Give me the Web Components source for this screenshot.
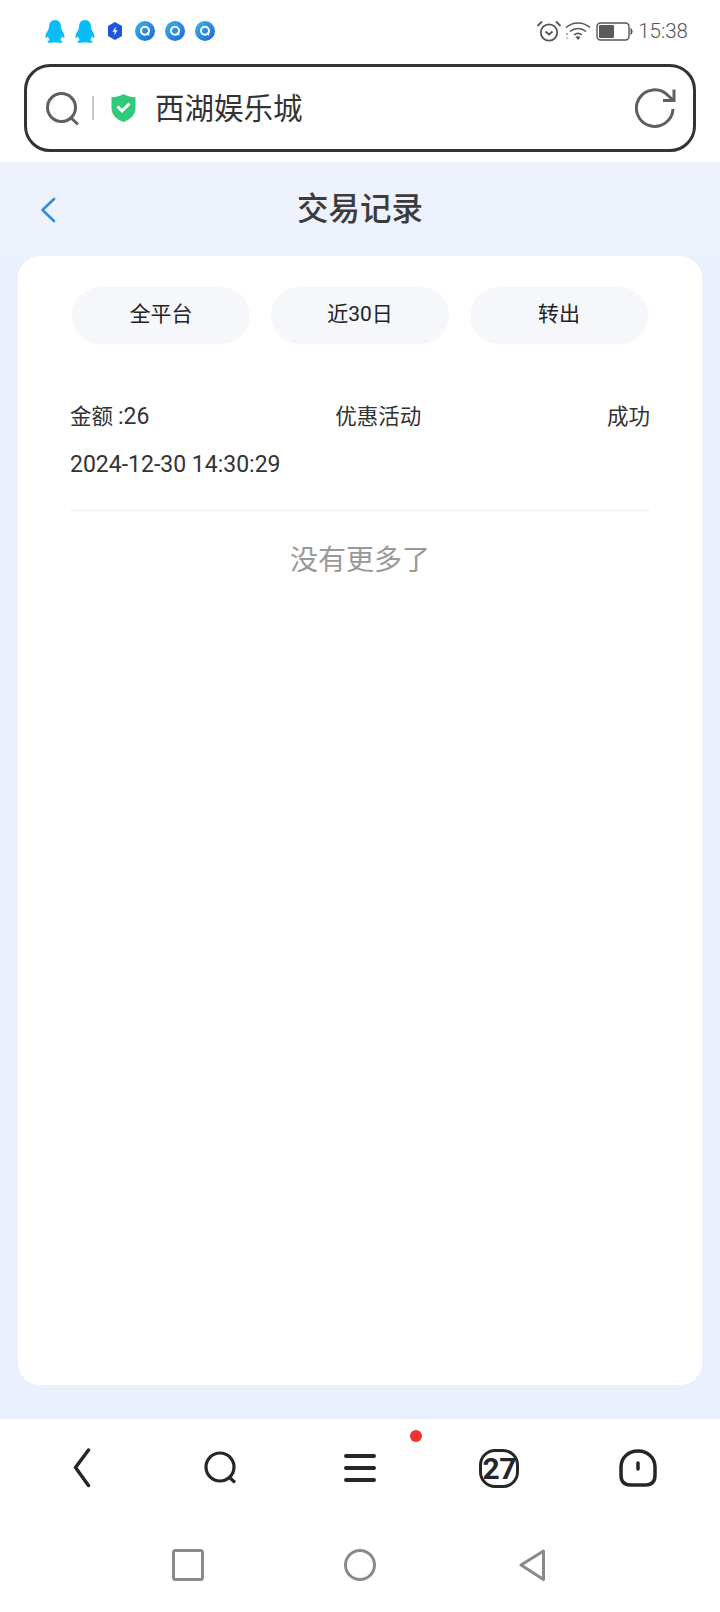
<!DOCTYPE html>
<html lang="zh">
<head>
<meta charset="utf-8">
<title>交易记录</title>
<style>
html, body { margin: 0; padding: 0; }
body {
    width: 720px;
    height: 1612px;
    overflow: hidden;
    display: flex;
    flex-direction: column;
    background: #fff;
    font-family: Roboto, "Noto Sans CJK SC", sans-serif;
}
</style>
</head>
<body>
<status-bar></status-bar>
<address-bar>西湖娱乐城</address-bar>
<page-header>交易记录</page-header>
<record-panel>
    <filter-pill>全平台</filter-pill>
    <filter-pill>近30日</filter-pill>
    <filter-pill>转出</filter-pill>
    <record-row slot="rows" label="金额" amount=":26" kind="优惠活动" state="成功" time="2024-12-30 14:30:29"></record-row>
</record-panel>
<browser-toolbar></browser-toolbar>
<nav-keys></nav-keys>

<script>
const penguin = `<svg width="20" height="23" viewBox="0 0 20 23"><path fill="#08bdf5" d="M10 0C6 0 4 3 4 7 4 9 2.500 11 1.500 13 .5 15 0 18 1 18 1.800 18 2.500 17 3 16 3.300 18 4 19.500 5 20 3.500 20.500 2.500 21 2.500 22 2.500 23 6 23 8 22.500H12C14 23 17.500 23 17.500 22 17.500 21 16.500 20.500 15 20 16 19.500 16.700 18 17 16 17.500 17 18.200 18 19 18 20 18 19.500 15 18.500 13 17.500 11 16 9 16 7 16 3 14 0 10 0z"/></svg>`;

const qBadge = `<svg width="20" height="20" viewBox="0 0 20 20"><defs><linearGradient id="qg" x1="0" y1="0" x2="1" y2="1"><stop offset="0" stop-color="#3fb2ee"/><stop offset="1" stop-color="#1668d2"/></linearGradient></defs><circle cx="10" cy="10" r="10" fill="url(#qg)"/><circle cx="10" cy="9.700" r="4" fill="none" stroke="#fff" stroke-width="2"/><path d="M11.800 11.800l2.200 2.200" stroke="#fff" stroke-width="1.800"/></svg>`;

class StatusBar extends HTMLElement {
    constructor() {
        super();
        this.shadowDOM = this.attachShadow({mode: "open"});
    }

    connectedCallback() {
        this.shadowDOM.innerHTML = `
        <style>
        :host {
            display: flex;
            align-items: center;
            justify-content: space-between;
            height: 62px;
            padding: 0 32px 0 45px;
        }
        .apps, .sys { display: flex; align-items: center; }
        .apps { gap: 10px; }
        .apps .hex { margin: 0 2px; }
        .sys svg { display: block; }
        .time {
            margin-left: 5px;
            font: 300 20.500px Roboto, sans-serif;
            color: #555;
        }
        </style>
        <div class="apps">
            ${penguin}${penguin}
            <svg class="hex" width="16" height="18" viewBox="0 0 16 18"><path fill="#1b55d8" d="M8 0l7 4v10l-7 4-7-4V4z"/><path fill="#fff" d="M8.800 4.500L5.500 9.700h2.200l-.5 3.800 3.300-5.200H8.300z"/></svg>
            ${qBadge}${qBadge}${qBadge}
        </div>
        <div class="sys">
            <svg width="26" height="22" viewBox="0 0 26 22" fill="none" stroke="#555" stroke-width="1.800"><circle cx="13" cy="12.500" r="8.200"/><path d="M9.500 11.500l3.500 3 3.500-3"/><path d="M1.500 6L6 1.500M24.500 6L20 1.500"/></svg>
            <svg style="margin-left:2px" width="28" height="20" viewBox="0 0 28 20" fill="none" stroke="#555" stroke-width="1.600"><path d="M2 6.500C9 .5 19 .5 26 6.500"/><path d="M6 10.500c4.800-4 11.200-4 16 0"/><path d="M10 14c2.500-2 5.500-2 8 0"/><path fill="#555" stroke="none" d="M11.500 16c1.500-1 3.500-1 5 0L14 19z"/><circle cx="3" cy="13" r=".9" fill="#888" stroke="none"/><circle cx="3" cy="17" r=".9" fill="#bbb" stroke="none"/></svg>
            <svg style="margin-left:4px" width="37" height="19" viewBox="0 0 37 19"><rect x="1" y="1" width="32" height="17" rx="3.500" fill="none" stroke="#555" stroke-width="1.400"/><rect x="3" y="3" width="15" height="13" rx="1" fill="#5a5a5a"/><path d="M34.500 6c1.500.6 2 2 2 3.500s-.5 2.900-2 3.500z" fill="#555"/></svg>
            <span class="time">15:38</span>
        </div>
        `;
    }
}

class AddressBar extends HTMLElement {
    constructor() {
        super();
        this.shadowDOM = this.attachShadow({mode: "open"});
    }

    connectedCallback() {
        this.shadowDOM.innerHTML = `
        <style>
        :host {
            display: flex;
            align-items: center;
            box-sizing: border-box;
            height: 88px;
            margin: 2px 24px 10px;
            padding: 0 17px 0 19px;
            border: 3px solid #333;
            border-radius: 26px;
            background: #fff;
        }
        .line { width: 2px; height: 24px; margin: 0 17px 0 13px; background: #c8c8c8; }
        .label {
            flex: 1;
            margin-left: 19px;
            padding-bottom: 4px;
            font: 400 29.500px "Noto Sans CJK SC", sans-serif;
            color: #333;
        }
        svg { display: block; }
        </style>
        <svg width="33" height="33" viewBox="0 0 33 33" fill="none" stroke="#5f5f5f" stroke-width="3"><circle cx="15.500" cy="15.500" r="14"/><path d="M25 26l6 5.500" stroke-linecap="round"/></svg>
        <span class="line"></span>
        <svg width="25" height="28" viewBox="0 0 25 28"><path fill="#2fcb78" d="M12.500 0c3 2 7 3 12 3.200V14c0 7-5 11.500-12 14C5.500 25.500.5 21 .5 14V3.200C5.500 3 9.500 2 12.500 0z"/><path d="M6.500 12.500l4.500 4.500 7.500-7.500" fill="none" stroke="#fff" stroke-width="3"/></svg>
        <span class="label"><slot></slot></span>
        <svg width="41" height="40" viewBox="0 0 41 40" fill="none" stroke="#5f5f5f" stroke-width="3"><path d="M38 21a18.300 18.300 0 1 1-5-13.500L38 12"/><path d="M39 1.500V12.500H28"/></svg>
        `;
    }
}

class PageHeader extends HTMLElement {
    constructor() {
        super();
        this.shadowDOM = this.attachShadow({mode: "open"});
    }

    connectedCallback() {
        this.shadowDOM.innerHTML = `
        <style>
        :host {
            display: flex;
            align-items: center;
            justify-content: center;
            position: relative;
            box-sizing: border-box;
            height: 94px;
            padding-bottom: 6px;
            background: #eef2fc;
            font: 500 31.500px "Noto Sans CJK SC", sans-serif;
            color: #3c3c3c;
        }
        svg { position: absolute; left: 40px; top: 35px; }
        </style>
        <svg width="16" height="26" viewBox="0 0 16 26" fill="none" stroke="#2f8de0" stroke-width="2.600" stroke-linecap="round" stroke-linejoin="round"><path d="M14 2L2.500 13 14 24"/></svg>
        <slot></slot>
        `;
    }
}

class FilterPill extends HTMLElement {
    constructor() {
        super();
        this.shadowDOM = this.attachShadow({mode: "open"});
    }

    connectedCallback() {
        this.shadowDOM.innerHTML = `
        <style>
        :host {
            display: flex;
            align-items: center;
            justify-content: center;
            box-sizing: border-box;
            width: 178px;
            height: 57px;
            padding-bottom: 7px;
            border-radius: 29px;
            background: #f6f7fb;
            font: 400 21px Roboto, "Noto Sans CJK SC", sans-serif;
            color: #222;
        }
        </style>
        <slot></slot>
        `;
    }
}

class RecordRow extends HTMLElement {
    constructor() {
        super();
        this.shadowDOM = this.attachShadow({mode: "open"});
    }

    connectedCallback() {
        this.shadowDOM.innerHTML = `
        <style>
        :host {
            display: block;
            height: 166px;
            margin: 0 -2px;
            border-bottom: 1px solid #f0f0f0;
            font: 400 21.500px/30px Roboto, "Noto Sans CJK SC", sans-serif;
            color: #333;
        }
        .top { display: flex; justify-content: space-between; padding-top: 58px; }
        .num { font-size: 23px; margin-left: 5px; }
        .time { margin-top: 18px; font-size: 23px; }
        </style>
        <div class="top">
            <span>${this.getAttribute("label")}<span class="num">${this.getAttribute("amount")}</span></span>
            <span>${this.getAttribute("kind")}</span>
            <span>${this.getAttribute("state")}</span>
        </div>
        <div class="time">${this.getAttribute("time")}</div>
        `;
    }
}

class RecordPanel extends HTMLElement {
    constructor() {
        super();
        this.shadowDOM = this.attachShadow({mode: "open"});
    }

    connectedCallback() {
        this.shadowDOM.innerHTML = `
        <style>
        :host {
            display: block;
            flex: 1;
            min-height: 0;
            padding-bottom: 34px;
            background: #ebf0fd;
        }
        .card {
            box-sizing: border-box;
            height: 100%;
            margin: 0 18px;
            padding: 31px 54px 0;
            border-radius: 22px;
            background: #fff;
        }
        .filters { display: flex; justify-content: space-between; }
        .end {
            margin-top: 27px;
            text-align: center;
            font: 400 28px "Noto Sans CJK SC", sans-serif;
            color: #999;
        }
        </style>
        <div class="card">
            <div class="filters"><slot></slot></div>
            <slot name="rows"></slot>
            <div class="end">没有更多了</div>
        </div>
        `;
    }
}

class BrowserToolbar extends HTMLElement {
    constructor() {
        super();
        this.shadowDOM = this.attachShadow({mode: "open"});
    }

    connectedCallback() {
        this.shadowDOM.innerHTML = `
        <style>
        :host {
            display: flex;
            align-items: center;
            height: 98px;
            padding: 0 12px;
            background: #fff;
        }
        .item {
            flex: 1;
            display: flex;
            justify-content: center;
            align-items: center;
            position: relative;
        }
        .dot {
            position: absolute;
            left: 120px;
            top: -23px;
            width: 12px;
            height: 12px;
            border-radius: 50%;
            background: #ee3333;
        }
        .day {
            box-sizing: border-box;
            display: flex;
            align-items: center;
            justify-content: center;
            width: 40px;
            height: 39px;
            border: 3.500px solid #262626;
            border-radius: 16px;
            font: 700 30px Roboto, sans-serif;
            letter-spacing: -.5px;
            color: #262626;
        }
        svg { display: block; }
        </style>
        <div class="item"><svg width="18" height="40" viewBox="0 0 18 40" fill="none" stroke="#262626" stroke-width="3.500" stroke-linecap="round" stroke-linejoin="round"><path d="M15.500 2L2.500 19.500 15.500 37.500"/></svg></div>
        <div class="item"><svg width="34" height="34" viewBox="0 0 34 34" fill="none" stroke="#262626" stroke-width="3.200"><circle cx="16" cy="16" r="14"/><path d="M25 26l6 5.500"/></svg></div>
        <div class="item"><svg width="32" height="30" viewBox="0 0 32 30" stroke="#262626" stroke-width="4" stroke-linecap="round"><path d="M2 3h28M2 15h28M2 27h28"/></svg><span class="dot"></span></div>
        <div class="item"><span class="day">27</span></div>
        <div class="item"><svg width="38" height="38" viewBox="0 0 38 38" fill="none" stroke="#262626" stroke-width="3.500"><path d="M19 2c9.500 0 17 6.500 17 16v8c0 6-3 10-9.500 10h-15C5 36 2 32 2 26v-8C2 8.500 9.500 2 19 2z"/><path d="M19 14v6" stroke-linecap="round"/></svg></div>
        `;
    }
}

class NavKeys extends HTMLElement {
    constructor() {
        super();
        this.shadowDOM = this.attachShadow({mode: "open"});
    }

    connectedCallback() {
        this.shadowDOM.innerHTML = `
        <style>
        :host {
            display: grid;
            grid-template-columns: repeat(3, 172px);
            justify-content: center;
            align-items: center;
            justify-items: center;
            flex: none;
            height: 95px;
            background: #fff;
        }
        svg { display: block; }
        </style>
        <svg width="32" height="32" viewBox="0 0 32 32" fill="none" stroke="#8a8a8a" stroke-width="3"><rect x="1.500" y="1.500" width="29" height="29" rx="2"/></svg>
        <svg width="32" height="32" viewBox="0 0 32 32" fill="none" stroke="#8a8a8a" stroke-width="3"><circle cx="16" cy="16" r="14.500"/></svg>
        <svg width="26" height="32" viewBox="0 0 26 32" fill="none" stroke="#8a8a8a" stroke-width="3" stroke-linejoin="round"><path d="M24.500 2L2 16l22.500 14.500z"/></svg>
        `;
    }
}

customElements.define("status-bar", StatusBar);
customElements.define("address-bar", AddressBar);
customElements.define("page-header", PageHeader);
customElements.define("filter-pill", FilterPill);
customElements.define("record-row", RecordRow);
customElements.define("record-panel", RecordPanel);
customElements.define("browser-toolbar", BrowserToolbar);
customElements.define("nav-keys", NavKeys);
</script>
</body>
</html>
